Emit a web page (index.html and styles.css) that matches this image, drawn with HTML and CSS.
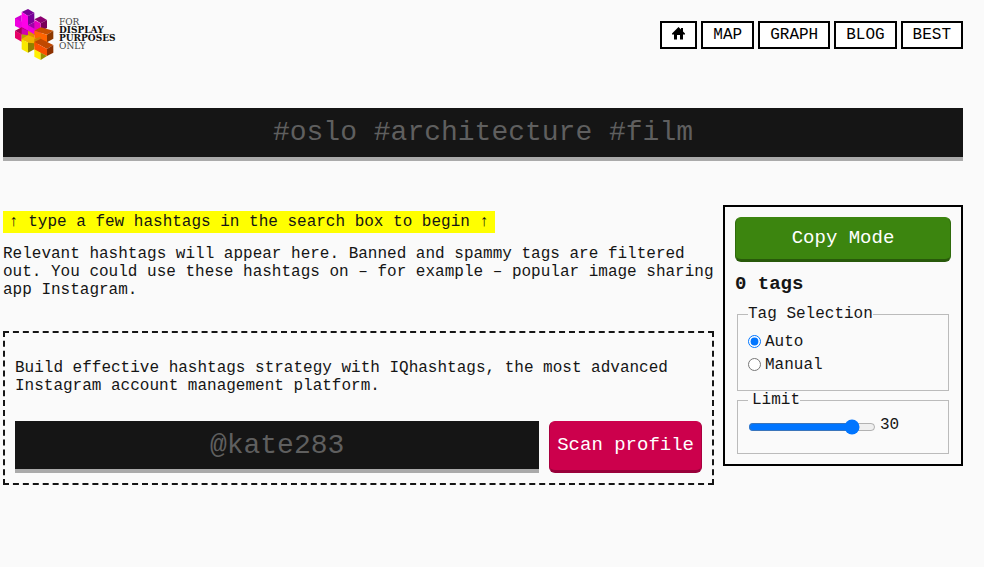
FILE: index.html
```html
<!DOCTYPE html>
<html lang="en">
<head>
  <meta charset="UTF-8" />
  <meta name="viewport" content="width=device-width, initial-scale=1.0"/>
  <title>Display Purposes</title>
  <link rel="stylesheet" href="styles.css">
</head>
<body>
  <header class="site-header">
    <a href="#" class="logo">
      <svg class="logo-mark" viewBox="45 27 117 153" aria-hidden="true">
        <!-- upper bars -->
        <polygon points="65,36 84,27 103,38 84,48" fill="#7a0096"/>
        <polygon points="103,58 122,49 141,60 122,70" fill="#8c0070"/>
        <polygon points="122,70 141,60 141,84 122,94" fill="#780058"/>
        <polygon points="45,55 65,44 65,68 45,78" fill="#d000d0"/>
        <polygon points="45,55 122,94 122,104 103,106 45,78" fill="#f000e0"/>
        <polygon points="65,36 84,48 84,90 65,80" fill="#ff00e8"/>
        <polygon points="84,48 103,38 103,66 84,76" fill="#780098"/>
        <polygon points="84,76 103,66 122,76 103,86" fill="#a000a8"/>
        <polygon points="103,60 122,70 122,98 103,88" fill="#e800c0"/>
        <!-- lower bars -->
        <polygon points="45,92 65,82 84,92 65,104" fill="#a80058"/>
        <polygon points="45,92 65,103 65,125 45,114" fill="#e80068"/>
        <polygon points="65,84 84,92 84,108 65,116" fill="#d000b0"/>
        <polygon points="65,103 84,106 84,120 65,125" fill="#b8a000"/>
        <polygon points="84,92 103,103 103,128 84,118" fill="#e09000"/>
        <polygon points="103,92 122,82 160,92 141,104" fill="#c85000"/>
        <polygon points="103,92 141,104 141,128 103,116" fill="#ff6400"/>
        <polygon points="141,104 160,92 160,116 141,127" fill="#8c3800"/>
        <polygon points="65,117 84,106 122,120 103,140" fill="#f0b400"/>
        <polygon points="65,117 84,128 84,158 65,148" fill="#f8e800"/>
        <polygon points="84,128 103,130 103,148 84,158" fill="#908000"/>
        <polygon points="103,116 122,110 122,128 103,136" fill="#d08000"/>
        <polygon points="103,126 122,116 160,135 141,147" fill="#c04800"/>
        <polygon points="103,126 141,147 141,168 103,150" fill="#fa5000"/>
        <polygon points="141,147 160,135 160,158 141,168" fill="#8c3000"/>
        <polygon points="103,148 122,158 122,180 103,170" fill="#fff000"/>
        <polygon points="122,158 141,168 122,180" fill="#989000"/>
      </svg>
      <span class="logo-text">FOR<strong>DISPLAY<br>PURPOSES</strong>ONLY</span>
    </a>
    <nav class="site-nav">
      <a href="#" aria-label="Home"><svg class="home-icon" viewBox="0 0 13 13" aria-hidden="true"><path d="M6.500 0 L9 2.500 V1 h2 v3.500 L13 6.500 V7.500 h-2 v5 H8 V8 H5 v4.500 H2 V7.500 H0 V6.500 Z"/></svg></a>
      <a href="#">MAP</a>
      <a href="#">GRAPH</a>
      <a href="#">BLOG</a>
      <a href="#">BEST</a>
    </nav>
  </header>

  <input type="text" class="dark-input search" placeholder="#oslo #architecture #film" aria-label="Search hashtags">

  <div class="columns">
    <main class="results">
      <mark class="hint">↑ type a few hashtags in the search box to begin ↑</mark>
      <p>Relevant hashtags will appear here. Banned and spammy tags are filtered out. You could use these hashtags on – for example – popular image sharing app Instagram.</p>
      <form class="promo">
        <p>Build effective hashtags strategy with IQhashtags, the most advanced Instagram account management platform.</p>
        <div class="promo-row">
          <input type="text" class="dark-input" placeholder="@kate283" aria-label="Instagram profile">
          <button type="button" class="btn btn-scan">Scan profile</button>
        </div>
      </form>
    </main>

    <aside class="panel">
      <button type="button" class="btn btn-copy">Copy Mode</button>
      <h3>0 tags</h3>
      <fieldset class="selection">
        <legend>Tag Selection</legend>
        <label class="option"><input type="radio" name="selection" checked>Auto</label>
        <label class="option"><input type="radio" name="selection">Manual</label>
      </fieldset>
      <fieldset class="limit">
        <legend><label for="limit">Limit</label></legend>
        <div class="limit-row">
          <input type="range" id="limit" min="0" max="35" value="30">
          <output for="limit">30</output>
        </div>
      </fieldset>
    </aside>
  </div>
</body>
</html>
```
FILE: styles.css
```css
* { box-sizing: border-box; }
body {
  margin: 0;
  padding: 0 21px 0 3px;
  font-family: "Courier New", "Liberation Mono", monospace;
  font-size: 16px;
  line-height: 18px;
  background-color: #fafafa;
  color: #151515;
}
input, button { font-family: inherit; }
p { margin: 0; }

.site-header {
  display: flex;
  justify-content: space-between;
  align-items: flex-start;
  height: 108px;
  padding: 9px 0 0 12px;
}
.logo {
  display: flex;
  gap: 5px;
  color: #151515;
  text-decoration: none;
}
.logo-mark { width: 39px; height: 51px; }
.logo-text {
  padding-top: 9px;
  font-family: "DejaVu Serif", serif;
  font-size: 9px;
  line-height: 8px;
  color: #444;
}
.logo-text strong { display: block; color: #111; }
.site-nav {
  display: flex;
  gap: 4px;
  padding-top: 12px;
}
.site-nav a {
  height: 28px;
  padding: 3px 10px;
  border: 2px solid #000;
  background-color: #fff;
  color: #000;
  text-decoration: none;
}
.home-icon { display: block; width: 13px; height: 13px; margin-top: 1px; }

.dark-input {
  width: 100%;
  height: 52px;
  padding: 0 10px;
  border: none;
  border-bottom: 4px solid #aaa;
  border-radius: 0;
  background-color: #151515;
  color: #fff;
  font-size: 28px;
  text-align: center;
}
.dark-input::placeholder { color: #5f5f5f; }
.search { display: block; height: 53px; }

.columns {
  display: grid;
  grid-template-columns: 1fr 240px;
  gap: 9px;
  align-items: start;
  margin-top: 44px;
}
.results { padding-top: 6px; }
.hint {
  display: inline-block;
  margin-bottom: 12px;
  padding: 2px 6px;
  background-color: #ff0;
  color: #151515;
}
.promo {
  margin-top: 32px;
  padding: 26px 10px 10px;
  border: 2px dashed #151515;
}
.promo-row {
  display: flex;
  gap: 10px;
  margin-top: 26px;
}
.promo-row .dark-input { flex: 1; min-width: 0; }

.btn {
  padding: 0 7px 2px;
  border: 1px solid;
  border-bottom-width: 3px;
  border-radius: 6px;
  color: #fff;
  font-size: 19px;
  cursor: pointer;
}
.btn-scan { background-color: #cc004c; border-color: #cc004c #a8003e #99003a; }
.btn-copy {
  display: block;
  width: 100%;
  height: 45px;
  background-color: #3c850f;
  border-color: #3c850f #2f6a0c #28590a;
}

.panel {
  padding: 10px;
  border: 2px solid #000;
}
.panel h3 { margin: 13px 0 12px; font-size: 19px; line-height: 18px; }
fieldset {
  margin: 0 2px;
  padding: 7px 10px 14px;
  border: 1px solid #bbb;
}
legend { padding: 0; }
.option { display: flex; align-items: center; gap: 4px; height: 23px; }
.option input { margin: 0; }
.limit { padding-bottom: 18px; }
.limit legend { padding-left: 4px; }
.limit-row { display: flex; align-items: flex-start; gap: 4px; }
.limit-row input { width: 128px; margin: 3px 0 0; }
```
